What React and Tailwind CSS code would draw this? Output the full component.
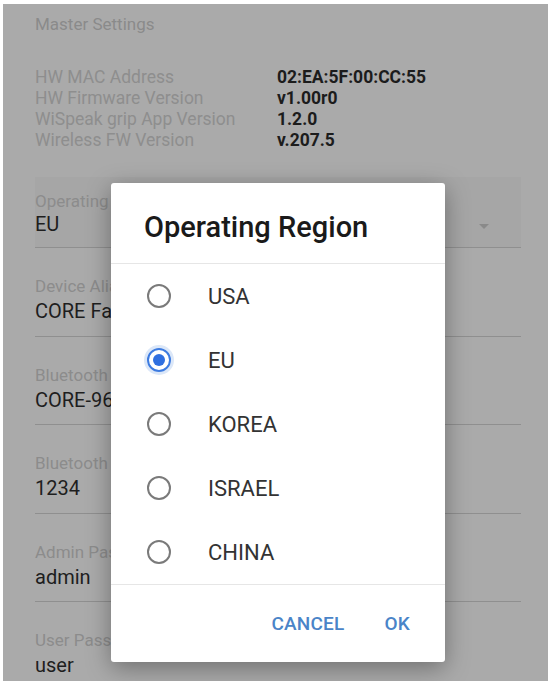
const infoRows = [
  ['HW MAC Address', '02:EA:5F:00:CC:55'],
  ['HW Firmware Version', 'v1.00r0'],
  ['WiSpeak grip App Version', '1.2.0'],
  ['Wireless FW Version', 'v.207.5'],
]

const fields = [
  ['Device Alias', 'CORE Factory'],
  ['Bluetooth Name', 'CORE-96C1'],
  ['Bluetooth PIN', '1234'],
  ['Admin Password', 'admin'],
]

const regions = ['USA', 'EU', 'KOREA', 'ISRAEL', 'CHINA']

function Radio({ checked }) {
  return (
    <span
      className={
        'flex h-[24px] w-[24px] shrink-0 items-center justify-center rounded-full border-2 ' +
        (checked ? 'border-[#3d7be0] shadow-[0_0_0_3px_#dbe7f8]' : 'border-[#7a7a7a]')
      }
    >
      {checked ? <span className="h-[12px] w-[12px] rounded-full bg-[#2f6fe0]" /> : null}
    </span>
  )
}

function Field({ label, value, last }) {
  return (
    <div className={'pt-[28px] pb-[12.5px] ' + (last ? '' : 'border-b border-[#8f8f8f]')}>
      <p className="h-5 text-[17px] leading-5 text-[#8c8c8c]">{label}</p>
      <p className="mt-[3px] text-[20px] leading-6 text-[#1e1e1e]">{value}</p>
    </div>
  )
}

function RegionDialog() {
  return (
    <div className="absolute left-[111px] top-[183px] flex h-[479px] w-[334px] flex-col rounded-[3px] bg-white shadow-[0_6px_24px_rgba(0,0,0,0.35)]">
      <div className="border-b border-[#e6e6e6] px-[33px] pt-[28px] pb-[20px]">
        <h2 className="text-[29px] font-medium leading-8 text-[#1a1a1a]">Operating Region</h2>
      </div>
      <ul className="border-b border-[#e6e6e6]">
        {regions.map((name) => (
          <li key={name} className="flex h-[64px] items-center pl-[36px]">
            <Radio checked={name === 'EU'} />
            <span className="ml-[37px] text-[22px] text-[#333]">{name}</span>
          </li>
        ))}
      </ul>
      <div className="flex flex-1 items-center justify-end gap-[40px] pr-[35px] pt-[1px]">
        <button type="button" className="text-[19px] font-medium tracking-[0.2px] text-[#4a84c8]">
          CANCEL
        </button>
        <button type="button" className="text-[19px] font-medium tracking-[0.2px] text-[#4a84c8]">
          OK
        </button>
      </div>
    </div>
  )
}

export default function App() {
  return (
    <div className="relative h-[681px] w-[551px] overflow-hidden bg-white pt-[4px] pl-[3px] font-['Roboto',sans-serif]">
      <div className="h-[677px] w-[545px] bg-[#aaaaaa] pt-[10px]">
        <div className="pl-[32px] pr-[27px]">
          <p className="text-[17px] leading-[21px] text-[#8a8a8a]">Master Settings</p>

          <div className="mt-[32px]">
            {infoRows.map(([label, value]) => (
              <div key={label} className="flex text-[17.5px] leading-[21px]">
                <span className="w-[242px] text-[#8e8e8e]">{label}</span>
                <span className="font-bold text-[#1c1c1c]">{value}</span>
              </div>
            ))}
          </div>

          <div className="mt-[26px] flex items-end border-b border-[#8f8f8f] bg-[#a6a6a6] pt-[14px] pb-[11px]">
            <div className="flex-1">
              <p className="h-5 text-[17px] leading-5 text-[#8c8c8c]">Operating Region</p>
              <p className="mt-[1px] text-[20px] leading-6 text-[#1e1e1e]">EU</p>
            </div>
            <svg width="10" height="6" viewBox="0 0 10 6" className="mr-[32px] mb-[6px]">
              <path d="M0 0h10L5 5z" fill="#8a8a8a" />
            </svg>
          </div>

          {fields.map(([label, value]) => (
            <Field key={label} label={label} value={value} />
          ))}
          <Field label="User Password" value="user" last />
        </div>
      </div>
      <RegionDialog />
    </div>
  )
}
